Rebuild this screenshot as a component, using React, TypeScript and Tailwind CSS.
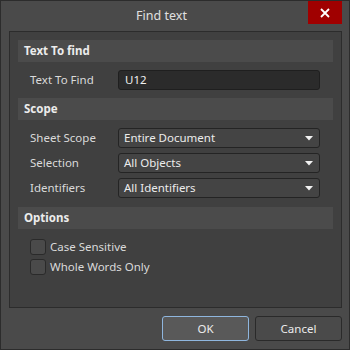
import React from "react";

function SectionHeader({ title }: { title: string }) {
  return (
    <div className="h-[22px] bg-[#4b4b4b] pl-[6px] flex items-center text-[11.5px] font-bold text-[#ececec]">
      {title}
    </div>
  );
}

function Row({ label, children }: { label: string; children: React.ReactNode }) {
  return (
    <div className="flex items-center h-[20px]">
      <div className="w-[100px] pl-[12px] text-[11.5px] text-[#dadada]">{label}</div>
      <div className="w-[202px]">{children}</div>
    </div>
  );
}

function Dropdown({ value }: { value: string }) {
  return (
    <div className="h-[20px] rounded-[3px] border border-[#242424] bg-[#444444] flex items-center pl-[5px] pr-[6px] text-[11.5px] text-[#ececec]">
      <span className="flex-1">{value}</span>
      <svg width="8" height="5" viewBox="0 0 8 5">
        <path d="M0 0H8L4 4.5Z" fill="#f2f2f2" />
      </svg>
    </div>
  );
}

function Checkbox({ label }: { label: string }) {
  return (
    <div className="flex items-center h-[15px] pl-[12px]">
      <div className="w-[16px] h-[16px] rounded-[3px] border border-[#2a2a2a] bg-[#4a4a4a]" />
      <span className="ml-[4px] text-[11.5px] text-[#dadada]">{label}</span>
    </div>
  );
}

export default function App() {
  return (
    <div
      className="w-[350px] h-[350px] bg-[#4a4a4a] border border-[#2c2c2c] flex flex-col"
      style={{ fontFamily: '"Noto Sans", "Open Sans", sans-serif' }}
    >
      <div className="h-[30px] flex items-start">
        <div className="flex-1 h-[30px] flex items-center justify-center pl-[14px] text-[12.5px] text-[#e0e0e0]">
          Find text
        </div>
        <button className="w-[34px] h-[23px] mr-[7px] bg-[#a00000] flex items-center justify-center">
          <svg width="10" height="10" viewBox="0 0 10 10">
            <path d="M1 1L9 9M9 1L1 9" stroke="#ffffff" strokeWidth="1.8" />
          </svg>
        </button>
      </div>

      <div className="ml-[8px] w-[333px] h-[277px] border border-[#2c2c2c] bg-[#404040] p-[8px] flex flex-col">
        <SectionHeader title="Text To find" />
        <div className="mt-[8px]">
          <Row label="Text To Find">
            <div className="h-[20px] rounded-[3px] border border-[#1f1f1f] bg-[#2b2b2b] flex items-center pl-[6px] text-[11.5px] text-[#f0f0f0]">
              U12
            </div>
          </Row>
        </div>
        <div className="mt-[8px]">
          <SectionHeader title="Scope" />
        </div>
        <div className="mt-[8px] flex flex-col gap-[5px]">
          <Row label="Sheet Scope">
            <Dropdown value="Entire Document" />
          </Row>
          <Row label="Selection">
            <Dropdown value="All Objects" />
          </Row>
          <Row label="Identifiers">
            <Dropdown value="All Identifiers" />
          </Row>
        </div>
        <div className="mt-[9px]">
          <SectionHeader title="Options" />
        </div>
        <div className="mt-[10px] flex flex-col gap-[5px]">
          <Checkbox label="Case Sensitive" />
          <Checkbox label="Whole Words Only" />
        </div>
      </div>

      <div className="mt-[8px] mr-[7px] flex justify-end gap-[6px]">
        <button className="w-[87px] h-[25px] rounded-[3px] border border-[#8fb6de] bg-[#595959] text-[11.5px] text-[#ececec]">
          OK
        </button>
        <button className="w-[87px] h-[25px] rounded-[3px] border border-[#2a2a2a] bg-[#4a4a4a] text-[11.5px] text-[#ececec]">
          Cancel
        </button>
      </div>
    </div>
  );
}
